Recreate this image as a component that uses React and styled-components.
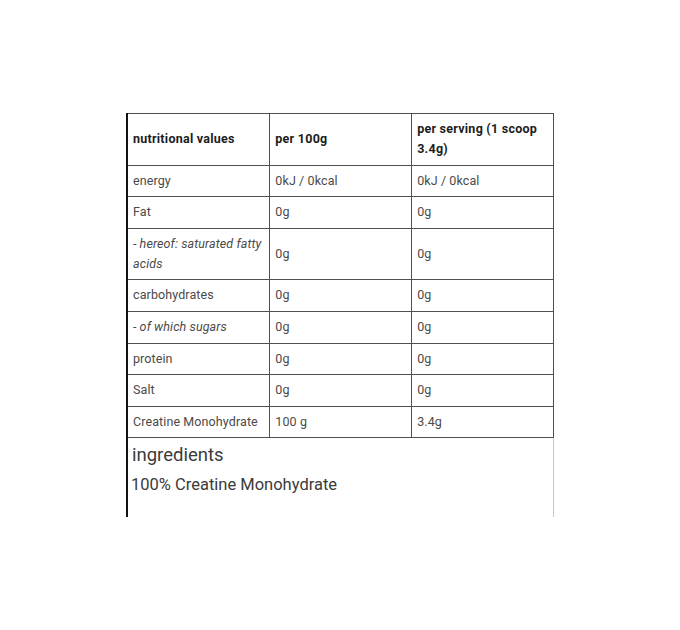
import React from 'react';
import styled, { createGlobalStyle } from 'styled-components';

const GlobalStyle = createGlobalStyle`
  html, body {
    margin: 0;
    padding: 0;
    background: #fff;
  }
  body {
    font-family: Roboto, "Liberation Sans", sans-serif;
  }
`;

const Page = styled.div`
  width: 680px;
  height: 630px;
  padding-top: 113px;
  padding-left: 126px;
  box-sizing: border-box;
`;

const Panel = styled.div`
  width: 428px;
  height: 404px;
  box-sizing: border-box;
  border-left: 2px solid #111;
  border-right: 1px solid #c8c8c8;
`;

const Table = styled.table`
  width: 426px;
  border-collapse: collapse;
  table-layout: fixed;
  font-size: 12.5px;
  line-height: 20px;
`;

const Cell = styled.td`
  border: 1px solid #505050;
  border-left: ${p => (p.$first ? 'none' : '1px solid #505050')};
  padding: 5px 5px 5.6px 5px;
  vertical-align: middle;
  color: ${p => (p.$head ? '#1c1c1c' : '#4a4a4a')};
  font-weight: ${p => (p.$head ? 700 : 400)};
  font-style: ${p => (p.$italic ? 'italic' : 'normal')};
  letter-spacing: ${p => (p.$head ? '0.25px' : '0.1px')};
`;

const Heading = styled.h3`
  margin: 5px 0 0 4px;
  font-size: 18.5px;
  font-weight: 400;
  line-height: 24px;
  color: #3a3a3a;
`;

const Ingredients = styled.p`
  margin: 8px 0 0 3px;
  font-size: 16.5px;
  line-height: 20px;
  color: #3a3a3a;
`;

const rows = [
  ['energy', '0kJ / 0kcal', '0kJ / 0kcal'],
  ['Fat', '0g', '0g'],
  ['- hereof: saturated fatty acids', '0g', '0g', true],
  ['carbohydrates', '0g', '0g'],
  ['- of which sugars', '0g', '0g', true],
  ['protein', '0g', '0g'],
  ['Salt', '0g', '0g'],
  ['Creatine Monohydrate', '100 g', '3.4g'],
];

export default function App() {
  return (
    <>
      <GlobalStyle />
      <Page>
        <Panel>
          <Table>
            <tbody>
              <tr>
                <Cell $head $first>nutritional values</Cell>
                <Cell $head>per 100g</Cell>
                <Cell $head>per serving (1 scoop 3.4g)</Cell>
              </tr>
              {rows.map(([name, a, b, italic]) => (
                <tr key={name}>
                  <Cell $first $italic={italic}>{name}</Cell>
                  <Cell>{a}</Cell>
                  <Cell>{b}</Cell>
                </tr>
              ))}
            </tbody>
          </Table>
          <Heading>ingredients</Heading>
          <Ingredients>100% Creatine Monohydrate</Ingredients>
        </Panel>
      </Page>
    </>
  );
}
